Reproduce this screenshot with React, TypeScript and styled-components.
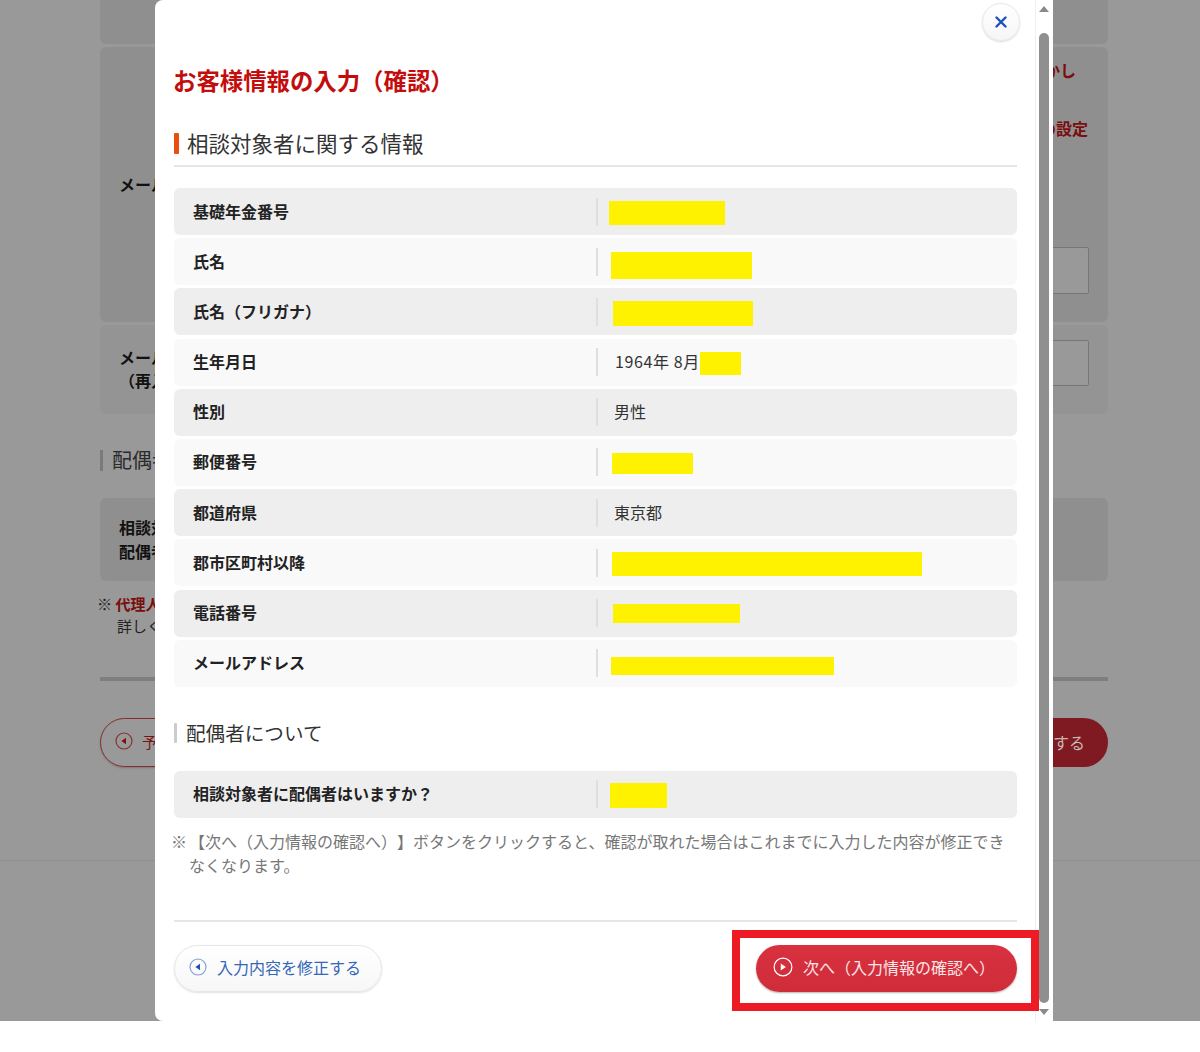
import React from "react";
import styled, { createGlobalStyle } from "styled-components";

const Global = createGlobalStyle`
  html, body { margin: 0; padding: 0; background: #fff; }
  body { font-family: "Noto Sans CJK JP", "Noto Sans", sans-serif; text-spacing-trim: space-all; }
  * { box-sizing: border-box; }
`;

const Screen = styled.div`
  position: relative;
  width: 1200px;
  height: 1052px;
  overflow: hidden;
`;

/* dimmed page behind the dialog */
const Backdrop = styled.div`
  height: 1021px;
  background: #999;
  overflow: hidden;
  display: flex;
  flex-direction: column;
  padding: 0 92px 0 100px;
  color: #111;
`;
const BgBlock = styled.div<{ $h: number; $tone?: string; $mt?: number }>`
  height: ${p => p.$h}px;
  margin-top: ${p => p.$mt ?? 3}px;
  background: ${p => p.$tone ?? "#8f8f8f"};
  border-radius: 6px;
  flex: none;
  display: flex;
  justify-content: space-between;
`;
const BgTop = styled(BgBlock)`
  margin-top: -6px;
`;
const BgLabel = styled.div<{ $pt: number; $lh?: number }>`
  padding: ${p => p.$pt}px 0 0 19px;
  font-size: 16px;
  line-height: ${p => p.$lh ?? 24}px;
  font-weight: 700;
  white-space: nowrap;
`;
const BgSide = styled.div`
  width: 300px;
  padding-right: 19px;
  display: flex;
  flex-direction: column;
  align-items: flex-end;
`;
const BgRedText = styled.div<{ $mt: number; $mr: number }>`
  margin: ${p => p.$mt}px ${p => p.$mr}px 0 0;
  color: #7a0d0d;
  font-size: 16px;
  line-height: 24px;
  font-weight: 700;
  white-space: nowrap;
`;
const BgInput = styled.div<{ $mt: number; $h: number }>`
  width: 280px;
  height: ${p => p.$h}px;
  margin-top: ${p => p.$mt}px;
  border: 1px solid #767676;
  border-radius: 2px;
  background: #999;
`;
const BgHeading = styled.div`
  margin-top: 36px;
  height: 21px;
  border-left: 3px solid #7a7a7a;
  padding-left: 9px;
  font-size: 20px;
  line-height: 19px;
  color: #2a2a2a;
`;
const BgNote = styled.div`
  margin-top: 12px;
  padding-left: 17px;
  font-size: 15px;
  line-height: 22px;
  text-indent: -20px;
  color: #222;
`;
const BgRed = styled.strong`
  color: #7a0d0d;
`;
const BgRule = styled.div`
  margin-top: 40px;
  height: 4px;
  background: #7e7e7e;
  flex: none;
`;
const BgButtons = styled.div`
  margin-top: 37px;
  display: flex;
  justify-content: space-between;
  height: 49px;
  flex: none;
`;
const BgGhost = styled.div`
  width: 260px;
  border: 1px solid #8a2a2a;
  border-radius: 25px;
  display: flex;
  align-items: center;
  padding: 0 0 3px 14px;
  gap: 9px;
  color: #7a1212;
  font-size: 15px;
  box-shadow: 0 1px 2px rgba(0, 0, 0, .2);
`;
const BgSolid = styled.div`
  width: 260px;
  background: #7f1a22;
  border-radius: 25px;
  display: flex;
  align-items: center;
  justify-content: flex-end;
  padding: 0 23px 2px 0;
  color: #c9b6b6;
  font-size: 16px;
`;
const BgFootLine = styled.div`
  margin: 93px -92px 0 -100px;
  height: 1px;
  background: #8e8e8e;
  flex: none;
`;

/* dialog */
const Overlay = styled.div`
  position: absolute;
  left: 155px;
  top: 0;
  width: 898px;
  height: 1021px;
  display: flex;
`;
const Dialog = styled.div`
  position: relative;
  width: 881px;
  height: 1021px;
  background: #fff;
  border-radius: 8px 0 0 8px;
  padding: 65px 19px 0;
  display: flex;
  flex-direction: column;
  flex: none;
  box-shadow: inset -1px 0 0 #f0eeee;
`;
const CloseBtn = styled.button`
  position: absolute;
  left: 827px;
  top: 3px;
  width: 38px;
  height: 38px;
  border-radius: 50%;
  border: 1px solid #e8e8e8;
  background: linear-gradient(#fff, #f6f6f6);
  box-shadow: 0 1px 2px rgba(0, 0, 0, .15);
  display: flex;
  align-items: center;
  justify-content: center;
  padding: 0;
`;
const Title = styled.h1`
  margin: 0 0 0 -1px;
  font-size: 23.4px;
  line-height: 30px;
  font-weight: 700;
  color: #c30d0d;
  height: 30px;
`;
const Heading = styled.h2<{ $line?: boolean; $accent: string; $barW: number; $barH: number; $mt: number; $pad: number; $size: number }>`
  margin: ${p => p.$mt}px 0 0;
  height: ${p => p.$barH + (p.$line ? 13 : 0)}px;
  font-size: ${p => p.$size}px;
  font-weight: 400;
  color: #333;
  display: flex;
  align-items: flex-start;
  gap: ${p => p.$pad}px;
  border-bottom: ${p => (p.$line ? "2px solid #e6e6e6" : "none")};
  &::before {
    content: "";
    width: ${p => p.$barW}px;
    height: ${p => p.$barH}px;
    border-radius: 1px;
    background: ${p => p.$accent};
    flex: none;
  }
`;
const HeadText = styled.span`
  line-height: 20px;
`;
const Rows = styled.div<{ $mt: number }>`
  margin-top: ${p => p.$mt}px;
  display: flex;
  flex-direction: column;
  gap: 3.2px;
`;
const Row = styled.div<{ $odd: boolean }>`
  height: 47px;
  background: ${p => (p.$odd ? "#eee" : "#f9f9f9")};
  border-radius: 6px;
  display: flex;
  align-items: center;
`;
const Label = styled.div`
  width: 422px;
  padding: 0 0 2px 19px;
  font-size: 16px;
  font-weight: 700;
  color: #222;
  flex: none;
`;
const Value = styled.div`
  height: 28px;
  border-left: 2px solid #dfdfdf;
  display: flex;
  align-items: center;
  padding-left: 16px;
  font-size: 16px;
  color: #333;
  white-space: nowrap;
`;
const ValueText = styled.span<{ $date: boolean }>`
  margin-bottom: 2px;
  margin-left: ${p => (p.$date ? 1 : 0)}px;
  letter-spacing: ${p => (p.$date ? 0.6 : 0)}px;
`;
const Redact = styled.span<{ $x: number; $w: number; $h: number; $dy: number }>`
  display: block;
  width: ${p => p.$w}px;
  height: ${p => p.$h}px;
  margin-left: ${p => p.$x}px;
  margin-top: ${p => p.$dy}px;
  background: #fff200;
  flex: none;
`;
const Note = styled.p`
  margin: 11px 0 0 -3px;
  display: flex;
  gap: 2px;
  font-size: 16px;
  line-height: 24px;
  color: #777;
`;
const NoteMark = styled.span`
  flex: none;
`;
const Rule = styled.div`
  margin-top: 43px;
  height: 2px;
  background: #e6e6e6;
  flex: none;
`;
const Actions = styled.div`
  margin-top: 23px;
  display: flex;
  justify-content: space-between;
`;
const BackBtn = styled.button`
  width: 208px;
  height: 47px;
  border-radius: 24px;
  border: 1px solid #e6e6e6;
  background: linear-gradient(#fff, #f7f7f7);
  box-shadow: 0 1px 2px rgba(0, 0, 0, .12);
  display: flex;
  align-items: center;
  gap: 10px;
  padding: 0 0 2px 14px;
  color: #3566b8;
  font: inherit;
  font-size: 16px;
`;
const NextBtn = styled.button`
  width: 261px;
  height: 47px;
  border-radius: 24px;
  border: none;
  background: linear-gradient(#d8313f, #cf2c3a);
  box-shadow: 0 1px 2px rgba(0, 0, 0, .3);
  display: flex;
  align-items: center;
  gap: 10px;
  padding: 0 0 2px 17px;
  color: #fbe6e8;
  font: inherit;
  font-size: 16px;
`;
const Highlight = styled.div`
  position: absolute;
  left: 577px;
  top: 930px;
  width: 307px;
  height: 81px;
  border: 8px solid #ed1c24;
  pointer-events: none;
`;

/* scrollbar */
const Scrollbar = styled.div`
  width: 17px;
  height: 1021px;
  background: #fff;
  flex: none;
  display: flex;
  flex-direction: column;
  align-items: center;
  padding: 6px 2px 6px 0;
`;
const Arrow = styled.div<{ $down?: boolean }>`
  width: 0;
  height: 0;
  border-left: 5px solid transparent;
  border-right: 5px solid transparent;
  ${p => (p.$down ? "border-top: 6px solid #8a8a8a;" : "border-bottom: 6px solid #8a8a8a;")}
  flex: none;
`;
const Thumb = styled.div`
  width: 10px;
  flex: 1;
  margin: 21px 0 6px;
  background: #8f8f8f;
  border-radius: 5px;
`;

const CircleIcon = ({ color, fill, dir, size }: { color: string; fill: string; dir: "l" | "r"; size: number }) => (
  <svg width={size} height={size} viewBox="0 0 18 18" style={{ flex: "none" }}>
    <circle cx="9" cy="9" r="8" fill="none" stroke={color} strokeWidth="1.1" />
    <path d={dir === "l" ? "M11 5.8v6.4L6.4 9z" : "M7 5.8v6.4L11.6 9z"} fill={fill} />
  </svg>
);

type R = { label: string; text?: string; date?: boolean; x?: number; w?: number; h?: number; dy?: number };
const rows: R[] = [
  { label: "基礎年金番号", x: -5, w: 116, h: 24, dy: 3 },
  { label: "氏名", x: -3, w: 141, h: 27, dy: 7 },
  { label: "氏名（フリガナ）", x: -1, w: 140, h: 25, dy: 3 },
  { label: "生年月日", text: "1964年 8月", date: true, x: 0, w: 41, h: 23, dy: 3 },
  { label: "性別", text: "男性" },
  { label: "郵便番号", x: -2, w: 81, h: 21, dy: 3 },
  { label: "都道府県", text: "東京都" },
  { label: "郡市区町村以降", x: -2, w: 310, h: 24, dy: 2 },
  { label: "電話番号", x: -1, w: 127, h: 19, dy: 1 },
  { label: "メールアドレス", x: -3, w: 223, h: 18, dy: 5 },
];

export default function App() {
  return (
    <Screen>
      <Global />
      <Backdrop>
        <BgTop $h={50} />
        <BgBlock $h={275}>
          <BgLabel $pt={125}>メールアドレス</BgLabel>
          <BgSide>
            <BgRedText $mt={11} $mr={13}>通知かし</BgRedText>
            <BgRedText $mt={34} $mr={1}>メールの設定</BgRedText>
            <BgInput $mt={107} $h={47} />
          </BgSide>
        </BgBlock>
        <BgBlock $h={89} $tone="#949494">
          <BgLabel $pt={21} $lh={23}>
            メールアドレス
            <br />
            （再入力）
          </BgLabel>
          <BgSide>
            <BgInput $mt={15} $h={46} />
          </BgSide>
        </BgBlock>
        <BgHeading>配偶者について</BgHeading>
        <BgBlock $h={83} $mt={27}>
          <BgLabel $pt={17}>
            相談対象者に
            <br />
            配偶者はいますか？
          </BgLabel>
        </BgBlock>
        <BgNote>
          ※ <BgRed>代理人</BgRed>について
          <br />
          詳しくはこちら
        </BgNote>
        <BgRule />
        <BgButtons>
          <BgGhost>
            <CircleIcon color="#8a2a2a" fill="#7a1212" dir="l" size={18} />
            予約内容の確認へ戻る
          </BgGhost>
          <BgSolid>確認する</BgSolid>
        </BgButtons>
        <BgFootLine />
      </Backdrop>
      <Overlay>
        <Dialog>
          <CloseBtn aria-label="close">
            <svg width="12" height="12" viewBox="0 0 12 12">
              <path d="M1.5 1.5l9 9M10.5 1.5l-9 9" stroke="#1d50b8" strokeWidth="2.4" strokeLinecap="round" />
            </svg>
          </CloseBtn>
          <Title>お客様情報の入力（確認）</Title>
          <Heading $line $accent="#e8500f" $barW={5} $barH={21} $mt={38} $pad={8} $size={21.5}>
            <HeadText>相談対象者に関する情報</HeadText>
          </Heading>
          <Rows $mt={21}>
            {rows.map((r, i) => (
              <Row key={r.label} $odd={i % 2 === 0}>
                <Label>{r.label}</Label>
                <Value>
                  {r.text && <ValueText $date={!!r.date}>{r.text}</ValueText>}
                  {r.w !== undefined && <Redact $x={r.x!} $w={r.w} $h={r.h!} $dy={r.dy!} />}
                </Value>
              </Row>
            ))}
          </Rows>
          <Heading $accent="#cccccc" $barW={3} $barH={20} $mt={36} $pad={9} $size={19.6}>
            <HeadText>配偶者について</HeadText>
          </Heading>
          <Rows $mt={28}>
            <Row $odd>
              <Label>相談対象者に配偶者はいますか？</Label>
              <Value>
                <Redact $x={-4} $w={57} $h={25} $dy={2} />
              </Value>
            </Row>
          </Rows>
          <Note>
            <NoteMark>※</NoteMark>
            <span>【次へ（入力情報の確認へ）】ボタンをクリックすると、確認が取れた場合はこれまでに入力した内容が修正できなくなります。</span>
          </Note>
          <Rule />
          <Actions>
            <BackBtn>
              <CircleIcon color="#7c9bd6" fill="#1d50b8" dir="l" size={18} />
              入力内容を修正する
            </BackBtn>
            <NextBtn>
              <CircleIcon color="#fff" fill="#fff" dir="r" size={20} />
              次へ（入力情報の確認へ）
            </NextBtn>
          </Actions>
          <Highlight />
        </Dialog>
        <Scrollbar>
          <Arrow />
          <Thumb />
          <Arrow $down />
        </Scrollbar>
      </Overlay>
    </Screen>
  );
}
